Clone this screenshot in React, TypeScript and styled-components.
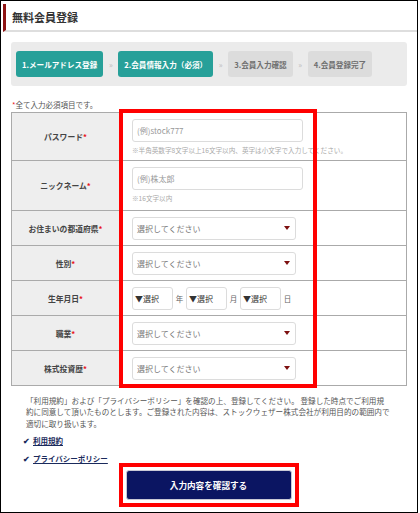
import React from "react"
import styled, { createGlobalStyle } from "styled-components"

const GlobalStyle = createGlobalStyle`
	html, body {
		margin: 0;
		padding: 0;
		background: #fff;
	}
	body {
		font-family: "Noto Sans CJK JP", "Noto Sans", sans-serif;
		color: #333;
	}
`

const steps = [
	{ label: "1.メールアドレス登録", active: true },
	{ label: "2.会員情報入力（必須）", active: true },
	{ label: "3.会員入力確認", active: false },
	{ label: "4.会員登録完了", active: false },
]

const selectRows = ["お住まいの都道府県", "性別"]
const lowerRows = ["職業", "株式投資歴"]

const Frame = styled.div`
	position: relative;
	box-sizing: border-box;
	width: 418px;
	height: 513px;
	border: 1px solid #000;
	overflow: hidden;
`

const Header = styled.div`
	display: flex;
	align-items: center;
	margin: 3px 0 0 2px;
	height: 26px;
	padding-left: 6px;
	border-left: 3px solid #8e1313;
	border-bottom: 2px solid #dedede;
	font-size: 11px;
	font-weight: 700;
	color: #333;
`

const Content = styled.div`
	margin: 10px 10px 0 10px;
	display: flex;
	flex-direction: column;
`

const StepBar = styled.div`
	display: flex;
	align-items: center;
	height: 44px;
	padding: 0 5px;
	background: #ebebeb;
	border-radius: 3px;
`

const Step = styled.div<{ $active: boolean }>`
	display: flex;
	align-items: center;
	height: 26px;
	padding: 0 6px;
	border-radius: 3px;
	background: ${(p) => (p.$active ? "#27a099" : "#dcdcdc")};
	color: ${(p) => (p.$active ? "#fff" : "#6f6f6f")};
	font-size: 7.6px;
	font-weight: 700;
	white-space: nowrap;
`

const StepArrow = styled.span`
	width: 15px;
	text-align: center;
	color: #bbb;
	font-size: 8px;
`

const RequiredNote = styled.div`
	margin-top: 12px;
	height: 14px;
	font-size: 7.5px;
	color: #555;
	line-height: 14px;
	padding-left: 1px;
`

const Star = styled.span`
	color: #e8141b;
`

const Table = styled.div`
	display: flex;
	flex-direction: column;
	border: 1px solid #aaa;
	width: 396px;
	box-sizing: border-box;
`

const Row = styled.div<{ $h: number }>`
	box-sizing: border-box;
	display: grid;
	grid-template-columns: 108px 1fr;
	height: ${(p) => p.$h}px;
	border-bottom: 1px solid #aaa;
	&:last-child {
		border-bottom: none;
	}
`

const Label = styled.div`
	display: flex;
	align-items: center;
	justify-content: center;
	background: #eeeeee;
	border-right: 1px solid #aaa;
	font-size: 7.8px;
	font-weight: 700;
	color: #444;
`

const Cell = styled.div<{ $top?: boolean }>`
	display: flex;
	flex-direction: column;
	justify-content: ${(p) => (p.$top ? "flex-start" : "center")};
	padding: ${(p) => (p.$top ? "6px 0 0 12px" : "0 0 0 12px")};
`

const TextInput = styled.div`
	box-sizing: border-box;
	width: 171px;
	height: 23px;
	display: flex;
	align-items: center;
	padding-left: 4px;
	border: 1px solid #dcdcdc;
	border-radius: 3px;
	font-size: 8px;
	color: #999;
`

const Hint = styled.div`
	margin-top: 3px;
	font-size: 6.6px;
	color: #aaa;
	white-space: nowrap;
`

const Select = styled.div<{ $w: number }>`
	box-sizing: border-box;
	width: ${(p) => p.$w}px;
	height: 23px;
	display: flex;
	align-items: center;
	justify-content: space-between;
	padding: 0 5px 0 4px;
	border: 1px solid #dcdcdc;
	border-radius: 3px;
	font-size: 8px;
	color: #777;
`

const Caret = styled.span`
	width: 0;
	height: 0;
	border-left: 3px solid transparent;
	border-right: 3px solid transparent;
	border-top: 4px solid #7d1010;
`

const DateRow = styled.div`
	display: flex;
	align-items: center;
`

const DateSelect = styled.div`
	box-sizing: border-box;
	width: 41px;
	height: 23px;
	display: flex;
	align-items: center;
	padding-left: 2px;
	border: 1px solid #dcdcdc;
	border-radius: 3px;
	font-size: 8px;
	color: #333;
`

const DateUnit = styled.span`
	width: 13px;
	text-align: center;
	font-size: 7.5px;
	color: #666;
`

const Notice = styled.p`
	margin: 9px 0 0 15px;
	width: 378px;
	font-size: 7.6px;
	line-height: 11.3px;
	color: #555;
`

const LinkRow = styled.div<{ $gap: number }>`
	display: flex;
	align-items: center;
	gap: 3px;
	margin: ${(p) => p.$gap}px 0 0 12px;
	font-size: 7.5px;
	font-weight: 700;
`

const Check = styled.span`
	color: #1a2a5c;
	font-size: 8px;
`

const Link = styled.a`
	color: #1a2a5c;
	text-decoration: underline;
`

const ButtonWrap = styled.div`
	display: flex;
	justify-content: center;
	margin-top: -1px;
	padding-right: 1px;
`

const ButtonHighlight = styled.div`
	display: flex;
	padding: 3px;
	border: 4px solid #ff0000;
`

const SubmitButton = styled.button`
	width: 166px;
	height: 30px;
	border: 1px solid #c9c9d6;
	border-radius: 3px;
	background: #0b1562;
	color: #fff;
	font-family: inherit;
	font-size: 8.6px;
	font-weight: 700;
`

const Highlight = styled.div`
	position: absolute;
	left: 118px;
	top: 108px;
	width: 198px;
	height: 279px;
	box-sizing: border-box;
	border: 4px solid #ff0000;
	pointer-events: none;
`

function LabelText({ text }: { text: string }) {
	return (
		<Label>
			{text}
			<Star>*</Star>
		</Label>
	)
}

function SelectRow({ label, h }: { label: string; h: number }) {
	return (
		<Row $h={h}>
			<LabelText text={label} />
			<Cell>
				<Select $w={164}>
					選択してください
					<Caret />
				</Select>
			</Cell>
		</Row>
	)
}

export default function App() {
	return (
		<Frame>
			<GlobalStyle />
			<Header>無料会員登録</Header>
			<Content>
				<StepBar>
					{steps.map((s, i) => (
						<React.Fragment key={s.label}>
							{i > 0 && <StepArrow>»</StepArrow>}
							<Step $active={s.active}>{s.label}</Step>
						</React.Fragment>
					))}
				</StepBar>
				<RequiredNote>
					<Star>*</Star>全て入力必須項目です。
				</RequiredNote>
				<Table>
					<Row $h={48}>
						<LabelText text="パスワード" />
						<Cell $top>
							<TextInput>(例)stock777</TextInput>
							<Hint>※半角英数字8文字以上16文字以内、英字は小文字で入力してください。</Hint>
						</Cell>
					</Row>
					<Row $h={50}>
						<LabelText text="ニックネーム" />
						<Cell $top>
							<TextInput>(例)株太郎</TextInput>
							<Hint>※16文字以内</Hint>
						</Cell>
					</Row>
					{selectRows.map((l) => (
						<SelectRow key={l} label={l} h={35} />
					))}
					<Row $h={35}>
						<LabelText text="生年月日" />
						<Cell>
							<DateRow>
								<DateSelect>▼選択</DateSelect>
								<DateUnit>年</DateUnit>
								<DateSelect>▼選択</DateSelect>
								<DateUnit>月</DateUnit>
								<DateSelect>▼選択</DateSelect>
								<DateUnit>日</DateUnit>
							</DateRow>
						</Cell>
					</Row>
					{lowerRows.map((l, i) => (
						<SelectRow key={l} label={l} h={i === 1 ? 34 : 35} />
					))}
				</Table>
				<Notice>
					「利用規約」および「プライバシーポリシー」を確認の上、登録してください。 登録した時点でご利用規
					<br />
					約に同意して頂いたものとします。ご登録された内容は、ストックウェザー株式会社が利用目的の範囲内で
					<br />
					適切に取り扱います。
				</Notice>
				<LinkRow $gap={6}>
					<Check>✔</Check>
					<Link>利用規約</Link>
				</LinkRow>
				<LinkRow $gap={7}>
					<Check>✔</Check>
					<Link>プライバシーポリシー</Link>
				</LinkRow>
				<ButtonWrap>
					<ButtonHighlight>
						<SubmitButton>入力内容を確認する</SubmitButton>
					</ButtonHighlight>
				</ButtonWrap>
			</Content>
			<Highlight />
		</Frame>
	)
}
